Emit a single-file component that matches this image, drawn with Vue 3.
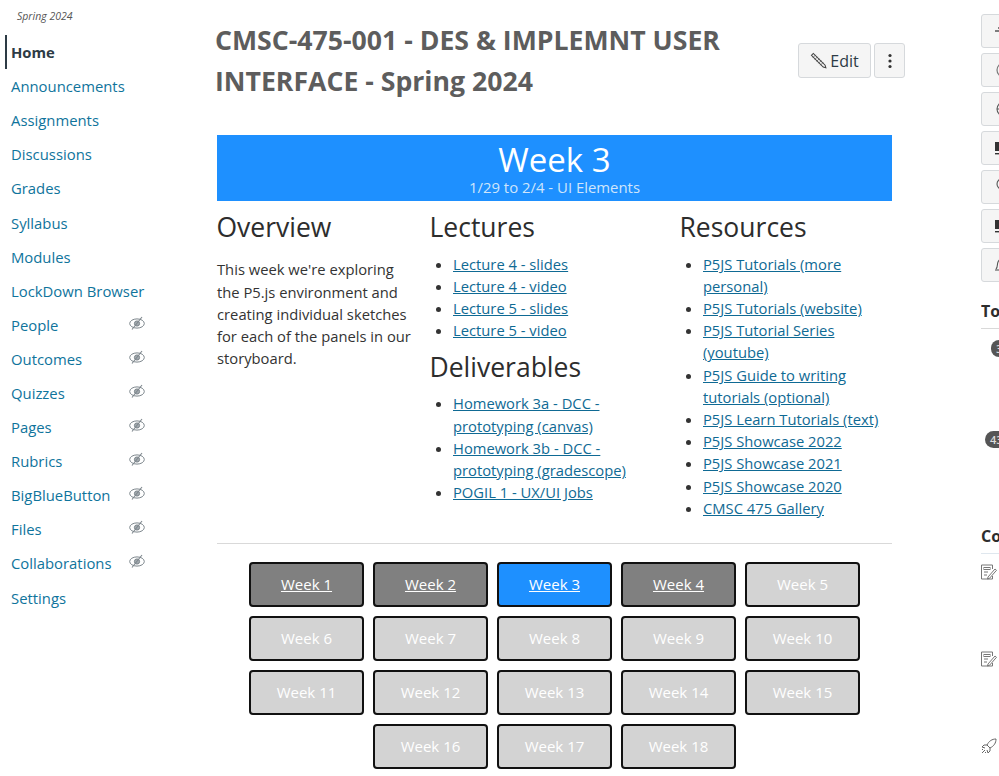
<script setup>
const nav = [
  ['Home', false], ['Announcements', false], ['Assignments', false], ['Discussions', false],
  ['Grades', false], ['Syllabus', false], ['Modules', false], ['LockDown Browser', false],
  ['People', true], ['Outcomes', true], ['Quizzes', true], ['Pages', true], ['Rubrics', true],
  ['BigBlueButton', true], ['Files', true], ['Collaborations', true], ['Settings', false]
]
const lectures = ['Lecture 4 - slides', 'Lecture 4 - video', 'Lecture 5 - slides', 'Lecture 5 - video']
const deliverables = ['Homework 3a - DCC - prototyping (canvas)', 'Homework 3b - DCC - prototyping (gradescope)', 'POGIL 1 - UX/UI Jobs']
const resources = ['P5JS Tutorials (more personal)', 'P5JS Tutorials (website)', 'P5JS Tutorial Series (youtube)', 'P5JS Guide to writing tutorials (optional)', 'P5JS Learn Tutorials (text)', 'P5JS Showcase 2022', 'P5JS Showcase 2021', 'P5JS Showcase 2020', 'CMSC 475 Gallery']
const weeks = Array.from({ length: 18 }, (_, i) => i + 1)
const state = (w) => (w === 3 ? 'current' : w <= 4 ? 'past' : 'future')
</script>

<template>
  <div class="page">
    <aside class="side">
      <div class="term">Spring 2024</div>
      <nav class="nav">
        <a v-for="([label, hidden], i) in nav" :key="label" class="nav-item" :class="{ active: i === 0 }">
          <span>{{ label }}</span>
          <svg v-if="hidden" class="eye" viewBox="0 0 16 14" width="16" height="14" fill="none" stroke="#7d868c" stroke-width="1">
            <ellipse cx="8" cy="7.500" rx="7.300" ry="4.600" />
            <circle cx="8" cy="7.500" r="2.600" fill="#a2a9ae" stroke="#7d868c" />
            <path d="M3 13.500 13 1" stroke-width="1.100" />
          </svg>
        </a>
      </nav>
    </aside>

    <main class="main">
      <header class="head">
        <h1>CMSC-475-001 - DES &amp; IMPLEMNT USER INTERFACE - Spring 2024</h1>
        <div class="actions">
          <button class="btn edit">
            <svg viewBox="0 0 18 18" width="17" height="17" fill="none" stroke="#444" stroke-width="1.100">
              <path d="M1.500 3.500 3.500 1.500 16 14l.8 2.800-2.800-.8z" />
              <path d="M3 6l3-3M5 8l3-3M7 10l3-3M9 12l3-3M11 14l3-3" stroke-width=".7" />
            </svg>
            Edit
          </button>
          <button class="btn more" aria-label="More">
            <svg viewBox="0 0 4 16" width="4" height="16" fill="#333">
              <circle cx="2" cy="2.500" r="1.600" /><circle cx="2" cy="8" r="1.600" /><circle cx="2" cy="13.500" r="1.600" />
            </svg>
          </button>
        </div>
      </header>

      <section class="content">
        <div class="banner">
          <div class="banner-title">Week 3</div>
          <div class="banner-sub">1/29 to 2/4 - UI Elements</div>
        </div>
        <div class="cols">
          <div>
            <h2>Overview</h2>
            <p>This week we're exploring the P5.js environment and creating individual sketches for each of the panels in our storyboard.</p>
          </div>
          <div>
            <h2>Lectures</h2>
            <ul><li v-for="l in lectures" :key="l"><a>{{ l }}</a></li></ul>
            <h2>Deliverables</h2>
            <ul><li v-for="l in deliverables" :key="l"><a>{{ l }}</a></li></ul>
          </div>
          <div>
            <h2>Resources</h2>
            <ul><li v-for="l in resources" :key="l"><a>{{ l }}</a></li></ul>
          </div>
        </div>
        <hr />
        <div class="weeks">
          <div v-for="w in weeks" :key="w" class="week" :class="state(w)">Week {{ w }}</div>
        </div>
      </section>
    </main>

    <aside class="right">
      <div class="tools">
        <div v-for="n in 7" :key="n" class="tool">
          <svg v-if="n === 1" viewBox="0 0 18 18" width="18" height="18" fill="none" stroke="#555" stroke-width="1.400"><path d="M8 2v14M0 9h16M3 6h10" /></svg>
          <svg v-else-if="n === 2" viewBox="0 0 18 18" width="18" height="18" fill="none" stroke="#777" stroke-width="1.200"><circle cx="9" cy="9" r="7" /><circle cx="9" cy="9" r="4" /></svg>
          <svg v-else-if="n === 3" viewBox="0 0 18 18" width="18" height="18" fill="none" stroke="#555" stroke-width="1.100"><circle cx="9" cy="9" r="7" /><path d="M2 9h14" /></svg>
          <svg v-else-if="n === 5" viewBox="0 0 18 18" width="18" height="18" fill="none" stroke="#555" stroke-width="1.100"><circle cx="7" cy="6" r="5" /><path d="M5.500 11v5" /></svg>
          <svg v-else-if="n === 7" viewBox="0 0 18 18" width="18" height="18" fill="none" stroke="#555" stroke-width="1.100"><path d="M1 13c2-2 1-5 2-7s3-4 5-4" /><path d="M0 14h10" /></svg>
          <svg v-else viewBox="0 0 18 18" width="18" height="18" fill="#333"><rect x="0" y="3" width="9" height="9" /><rect x="0" y="14" width="12" height="1.400" /></svg>
        </div>
      </div>
      <h3 class="to">To</h3>
      <div class="rule"></div>
      <div class="badge b1">3</div>
      <div class="badge b2">43</div>
      <h3 class="co">Co</h3>
      <div class="rule blue"></div>
      <svg class="doc d1" viewBox="0 0 16 16" width="16" height="16" fill="none" stroke="#777" stroke-width="1"><path d="M11.500 5V1H.5v14h11v-3" /><rect x="3" y="3.500" width="6" height="2" /><path d="M3 8h4M3 11h3" /><path d="M7 13l7-8 1.500 1.300-7 8-2 .7z" /></svg>
      <svg class="doc d2" viewBox="0 0 16 16" width="16" height="16" fill="none" stroke="#777" stroke-width="1"><path d="M11.500 5V1H.5v14h11v-3" /><rect x="3" y="3.500" width="6" height="2" /><path d="M3 8h4M3 11h3" /><path d="M7 13l7-8 1.500 1.300-7 8-2 .7z" /></svg>
      <svg class="doc d3" viewBox="0 0 16 16" width="16" height="16" fill="none" stroke="#666" stroke-width="1"><path d="M15 1c-4 0-7 2-9 6l3 3c4-2 6-5 6-9z" /><path d="M6 7H3L1 9l3 1M9 10v3l-2 2-1-3M4 12l-3 3M2 11l-1 1M5 14l-1 1" /></svg>
    </aside>
  </div>
</template>

<style scoped>
.page {
  display: flex;
  width: 999px;
  height: 776px;
  overflow: hidden;
  font-family: "Open Sans", sans-serif;
  color: #2d3b45;
  background: #fff;
}
.side { width: 216px; flex: none; padding-top: 9px; box-sizing: border-box; }
.term { font-size: 10.5px; font-style: italic; color: #555; line-height: 15px; padding-left: 17px; margin-bottom: 11px; }
.nav { display: flex; flex-direction: column; }
.nav-item {
  display: flex;
  justify-content: space-between;
  align-items: center;
  width: 134px;
  height: 34.1px;
  padding-left: 11px;
  font-size: 14.85px;
  color: #0f749c;
  box-sizing: content-box;
}
.nav-item span { white-space: nowrap; }
.nav-item.active { font-weight: 700; color: #2d3b45; position: relative; }
.nav-item.active::before { content: ""; position: absolute; left: 5px; top: 0; width: 2px; height: 34px; background: #2d3b45; }
.eye { flex: none; margin-top: -4px; }

.main { width: 765px; flex: none; }
.head { display: flex; width: 689px; align-items: flex-start; justify-content: space-between; padding-top: 20px; height: 135px; box-sizing: border-box; }
h1 { margin: 0 0 0 -1px; width: 560px; font-size: 26.65px; line-height: 41px; font-weight: 700; color: #5d5d5d; }
.actions { display: flex; gap: 3px; margin-top: 23px; }
.btn {
  height: 35px;
  border: 1px solid #d6d9dc;
  border-radius: 3px;
  background: #f5f5f5;
  display: flex;
  align-items: center;
  justify-content: center;
  font: 16px "Open Sans", sans-serif;
  color: #2d3b45;
  padding: 0;
}
.edit { width: 73px; gap: 3px; }
.more { width: 31px; }

.content { width: 675px; margin-left: 1px; }
.banner { height: 66px; background: #1e90ff; color: #fff; text-align: center; display: flex; flex-direction: column; align-items: center; padding-top: 6px; box-sizing: border-box; }
.banner-title { font-size: 33px; line-height: 38px; }
.banner-sub { font-size: 14.9px; line-height: 14px; margin-top: 1px; color: #cfe5fb; }
.cols { display: grid; grid-template-columns: 213px 250px 212px; color: #333; font-size: 14.75px; line-height: 22.2px; height: 328px; }
.cols h2 { margin: 8px 0 6.6px -0.5px; font-size: 26.5px; line-height: 37px; font-weight: 400; color: #2d2d2d; }
.cols p { margin: 12.4px 0 0; width: 200px; }
.cols ul { margin: 0; padding: 0 0 0 23px; }
.cols ul + h2 { margin-top: 8px; margin-bottom: 6px; }
.cols li a { color: #0f6a94; text-decoration: underline; }
hr { border: 0; border-top: 1px solid #d9d9d9; margin: 14px 0 18px; }
.weeks { display: flex; flex-wrap: wrap; justify-content: center; gap: 9px; width: 615px; margin-left: 30px; }
.week {
  width: 115px;
  height: 45px;
  box-sizing: border-box;
  border: 2px solid #111;
  border-radius: 4px;
  display: flex;
  align-items: center;
  justify-content: center;
  padding-bottom: 2px;
  font-size: 15px;
  color: #fff;
}
.past { background: #808080; text-decoration: underline; }
.current { background: #1e90ff; text-decoration: underline; }
.future { background: #d3d3d3; }

.right { flex: none; width: 18px; overflow: hidden; }
.tools { display: flex; flex-direction: column; gap: 5px; padding-top: 14px; width: 40px; }
.tool { width: 40px; height: 34px; border: 1px solid #d6d9dc; border-radius: 3px; background: #f5f5f5; display: flex; align-items: center; padding-left: 13px; box-sizing: border-box; }
.to, .co { margin: 0; font-size: 16px; line-height: 20px; font-weight: 700; color: #2d2d2d; white-space: nowrap; }
.to { margin-top: 19px; }
.co { margin-top: 78px; }
.rule { height: 1px; background: #d9d9d9; margin-top: 7px; }
.rule.blue { background: #dfe7ee; }
.badge { width: fit-content; background: #555; color: #ddd; font-size: 11px; font-weight: 600; height: 17px; line-height: 17px; border-radius: 9px; padding: 0 5px; }
.b1 { margin: 11px 0 0 10px; }
.b2 { margin: 74px 0 0 4px; }
.doc { display: block; }
.d1 { margin-top: 10px; }
.d2, .d3 { margin-top: 71px; }
</style>
